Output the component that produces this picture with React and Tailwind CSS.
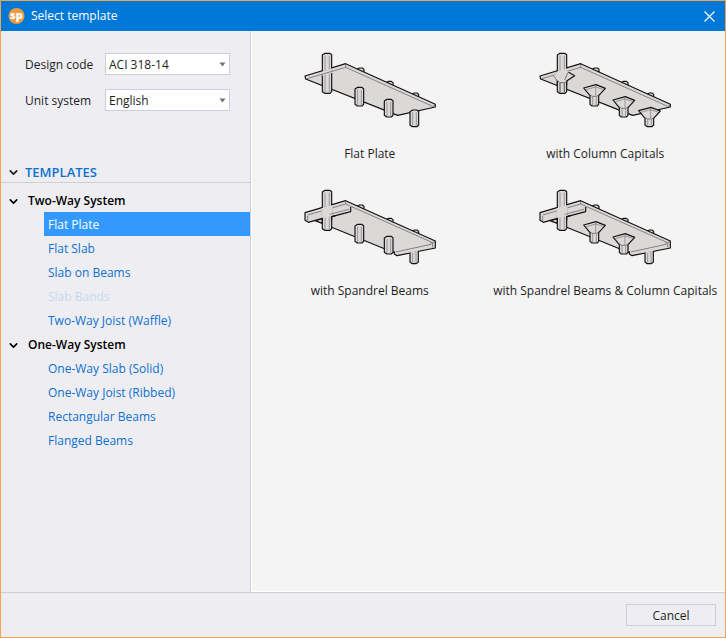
import { useState } from 'react';
import { ChevronDown } from 'lucide-react';

const groups = [
  {
    name: 'Two-Way System',
    items: ['Flat Plate', 'Flat Slab', 'Slab on Beams', 'Slab Bands', 'Two-Way Joist (Waffle)'],
  },
  {
    name: 'One-Way System',
    items: ['One-Way Slab (Solid)', 'One-Way Joist (Ribbed)', 'Rectangular Beams', 'Flanged Beams'],
  },
];
const disabledItems = ['Slab Bands'];

const templates = [
  { name: 'Flat Plate' },
  { name: 'with Column Capitals', capitals: true },
  { name: 'with Spandrel Beams', spandrel: true },
  { name: 'with Spandrel Beams & Column Capitals', spandrel: true, capitals: true },
];

function Logo() {
  return (
    <svg className="size-[17px]" viewBox="0 0 17 17" aria-hidden="true">
      <circle cx="8.5" cy="8" r="8" fill="#ee9a3f" />
      <text x="8.5" y="11" textAnchor="middle" fontSize="11" fontWeight="800" fill="#fff" fontFamily="Open Sans, sans-serif">
        sp
      </text>
    </svg>
  );
}

// x, y: top left of the column, b: its bottom
function Column({ x, y, b, w = 26 }) {
  return (
    <g>
      <path d={`M${x} ${y + 5}L${x + 8} ${y}H${x + w - 6}L${x + w} ${y + 4}V${b - 5}L${x + w - 5} ${b}H${x + 7}L${x} ${b - 5}Z`} />
      <path d={`M${x + 8} ${y + 7}V${b - 3}M${x + w - 7} ${y + 7}V${b - 3}`} stroke="#777" strokeWidth="2" />
    </g>
  );
}

function CapitalColumn({ x, y, b }) {
  return (
    <g>
      <path d={`M${x - 19} ${y + 2}L${x + 18} ${y - 8}L${x + 46} ${y + 3}L${x + 26} ${y + 25}V${b - 5}L${x + 21} ${b}H${x + 6}L${x} ${b - 5}V${y + 25}Z`} />
      <path d={`M${x} ${y + 23}L${x + 7} ${y + 27}H${x + 20}L${x + 26} ${y + 23}`} stroke="#444" strokeWidth="2" fill="none" />
      <path
        d={`M${x - 12} ${y + 7}L${x + 17} ${y - 1}L${x + 39} ${y + 6}M${x + 17} ${y - 6}V${y + 25}M${x + 8} ${y + 28}V${b - 3}M${x + 19} ${y + 28}V${b - 3}`}
        stroke="#777"
        strokeWidth="2"
        fill="none"
      />
    </g>
  );
}

function SlabDrawing({ spandrel, capitals }) {
  const Support = capitals ? CapitalColumn : Column;
  return (
    <svg className="h-[95px] w-[150px]" viewBox="0 0 450 285" fill="#dcd8d8" stroke="#111" strokeWidth="3.5" strokeLinejoin="round" aria-hidden="true">
      <path d="M188 92V87L193 84H202L207 88V98ZM275 131V127L281 124H289L294 128V138ZM352 166V162L358 159H366L371 163V173Z" />
      {spandrel ? (
        <>
          <path d="M60 131L82 139V125Z" />
          <path d="M110 117L166 103L152 71L421 192L408 206L298 227L110 151Z" stroke="none" />
          <path d="M110 151L298 227" />
          <path d="M30 107L152 71L421 192V213L370 223L308 236L298 231V223L408 199L167 90V104L40 136L30 130Z" stroke="none" />
          <path d="M82 124L40 136L30 130V107L152 71L421 192V213L306 236L298 231V223" fill="none" />
          <path d="M110 119L167 104V90" fill="none" />
          <path d="M38 114L152 81L413 197V211M302 225L408 202V196M38 117V131M152 81V73M413 197L420 194" fill="none" stroke="#555" strokeWidth="2" />
        </>
      ) : (
        <>
          <path d="M30 108L152 71L421 193V201L308 226L32 117Z" />
          <path d="M36 116L152 82L413 199L420 195M152 82V73" fill="none" stroke="#555" strokeWidth="2" />
        </>
      )}
      <Column x={82} y={40} b={160} w={28} />
      {capitals && !spandrel && (
        <>
          <path d="M70 106L110 93L134 107L110 125V130H82V124Z" stroke="none" />
          <path d="M82 122V134M110 134V123L134 107L116 97" fill="none" />
          <path d="M70 106L82 123L90 128H104L110 124M104 120L114 97L134 107M90 128V157M103 128V157" fill="none" stroke="#444" strokeWidth="2" />
        </>
      )}
      {spandrel ? (
        <>
          <path d="M79 94L113 84V117L79 124Z" stroke="none" />
          <path d="M104 112L162 97" stroke="#555" strokeWidth="2" />
          <path d="M82 122V130M110 130V119L122 116" fill="none" />
        </>
      ) : (
        <>
          <path d="M79 95L113 85V98L79 107Z" stroke="none" />
          {!capitals && <path d="M78 104L114 93" stroke="#555" strokeWidth="2" />}
        </>
      )}
      <Support x={180} y={142} b={198} />
      <Support x={268} y={178} b={231} />
      {spandrel ? (
        <>
          <path d="M345 226V255L351 260H364L370 255V221" />
          <path d="M338 221L376 213V219L338 227Z" stroke="none" />
          <path d="M353 227V257M363 225V257" stroke="#777" strokeWidth="2" />
        </>
      ) : (
        <Support x={345} y={210} b={260} />
      )}
    </svg>
  );
}

function SelectField({ id, label, options }) {
  return (
    <div className="flex items-center">
      <label htmlFor={id} className="w-20 pt-[2px]">
        {label}
      </label>
      <div className="relative w-[125px]">
        <select id={id} className="block h-[22px] w-full appearance-none border border-[#ccceDB] bg-white px-[3px] pt-px text-[12px] leading-5">
          {options.map((o) => (
            <option key={o}>{o}</option>
          ))}
        </select>
        <svg className="pointer-events-none absolute top-[9px] right-1 h-[5px] w-[7px]" viewBox="0 0 7 5" aria-hidden="true">
          <path d="M0.5 0.5H6.5L3.5 4.5Z" fill="#717171" />
        </svg>
      </div>
    </div>
  );
}

function TreeGroup({ name, items, selected, onSelect }) {
  const [open, setOpen] = useState(true);
  return (
    <li>
      <button type="button" aria-expanded={open} onClick={() => setOpen(!open)} className="flex h-6 w-full items-center gap-2 pt-[2px] pl-[6px] font-semibold text-black">
        <ChevronDown size={13} strokeWidth={3} />
        {name}
      </button>
      {open && (
        <ul className="pl-[43px]">
          {items.map((item) => (
            <li key={item}>
              <button
                type="button"
                disabled={disabledItems.includes(item)}
                onClick={() => onSelect(item)}
                className={`block h-6 w-full pt-[2px] pl-1 text-left disabled:text-[#c5d9ed] ${
                  item === selected ? 'bg-[#3399ff] text-white' : 'text-[#0e70d1]'
                }`}
              >
                {item}
              </button>
            </li>
          ))}
        </ul>
      )}
    </li>
  );
}

export default function App() {
  const [selected, setSelected] = useState('Flat Plate');
  return (
    <div className="flex min-h-screen flex-col border border-[#f3a64f] bg-[#eeeef2] font-['Open_Sans','Noto_Sans',sans-serif] text-[12px] leading-5 text-[#1e1e1e]">
      <header className="flex h-[30px] items-center gap-[6px] bg-[#0078d7] pl-[7px] text-white">
        <Logo />
        <h1 className="flex-1">Select template</h1>
        <button type="button" aria-label="Close" className="flex h-full w-8 items-center justify-center">
          <svg className="size-[11px]" viewBox="0 0 11 11" stroke="currentColor" strokeWidth="1.1" aria-hidden="true">
            <path d="M0.5 0.5L10.5 10.5M10.5 0.5L0.5 10.5" />
          </svg>
        </button>
      </header>
      <main className="flex flex-1">
        <aside className="w-[250px] shrink-0 border-r border-[#cfcfd3] pt-[22px]">
          <div className="flex flex-col gap-[14px] pl-6">
            <SelectField id="code" label="Design code" options={['ACI 318-14', 'ACI 318-11']} />
            <SelectField id="unit" label="Unit system" options={['English', 'Metric']} />
          </div>
          <h2 className="mt-[51px] flex h-[21px] items-center gap-[5px] border-b border-[#cfcfd3] pl-[6px] text-[13px] font-semibold text-[#0e70d1]">
            <ChevronDown size={13} strokeWidth={3} className="text-[#1e1e1e]" />
            TEMPLATES
          </h2>
          <ul className="pt-[5px]">
            {groups.map((g) => (
              <TreeGroup key={g.name} {...g} selected={selected} onSelect={setSelected} />
            ))}
          </ul>
        </aside>
        <section className="flex-1 border-b border-l border-white bg-[#f4f4f4] pt-[9px] pr-[2px]">
          <div className="grid grid-cols-2 gap-y-[13px]">
            {templates.map(({ name, ...shape }) => (
              <button key={name} type="button" className="flex flex-col items-center gap-[9px] whitespace-nowrap">
                <SlabDrawing {...shape} />
                {name}
              </button>
            ))}
          </div>
        </section>
      </main>
      <footer className="flex h-[45px] items-center justify-end border-t border-[#cfcfd3] pr-[9px]">
        <button type="button" className="h-[22px] w-[90px] border border-[#ccceDB] pt-px">
          Cancel
        </button>
      </footer>
    </div>
  );
}
